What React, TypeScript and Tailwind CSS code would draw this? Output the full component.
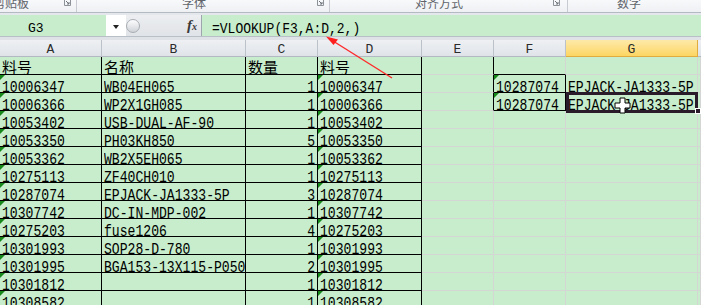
import React from 'react';

type Row = { a: string; b: string; c: string; d: string; f?: string; g?: string };

const rows: Row[] = [
  { a: '料号', b: '名称', c: '数量', d: '料号' },
  { a: '10006347', b: 'WB04EH065', c: '1', d: '10006347', f: '10287074', g: 'EPJACK-JA1333-5P' },
  { a: '10006366', b: 'WP2X1GH085', c: '1', d: '10006366', f: '10287074', g: 'EPJACK-JA1333-5P' },
  { a: '10053402', b: 'USB-DUAL-AF-90', c: '1', d: '10053402' },
  { a: '10053350', b: 'PH03KH850', c: '5', d: '10053350' },
  { a: '10053362', b: 'WB2X5EH065', c: '1', d: '10053362' },
  { a: '10275113', b: 'ZF40CH010', c: '1', d: '10275113' },
  { a: '10287074', b: 'EPJACK-JA1333-5P', c: '3', d: '10287074' },
  { a: '10307742', b: 'DC-IN-MDP-002', c: '1', d: '10307742' },
  { a: '10275203', b: 'fuse1206', c: '4', d: '10275203' },
  { a: '10301993', b: 'SOP28-D-780', c: '1', d: '10301993' },
  { a: '10301995', b: 'BGA153-13X115-P050', c: '2', d: '10301995' },
  { a: '10301812', b: '', c: '1', d: '10301812' },
  { a: '10308582', b: '', c: '1', d: '10308582' },
];

const R_BLK = 'border-r-black';
const R_GRY = 'border-r-[#d3d6d3]';
const B_BLK = 'border-b-black';
const B_GRY = 'border-b-[#d3d6d3]';

const mono = "font-['Liberation_Mono','Noto_Sans_CJK_SC',monospace]";

// ascii cell text, stretched a little to look like SimSun's half-width glyphs
const T = ({ children }: { children: React.ReactNode }) => (
  <span className={`${mono} -mb-[4px] inline-block origin-bottom scale-y-130 whitespace-nowrap text-[13.1px] leading-none text-black`}>
    {children}
  </span>
);

const Cjk = ({ children }: { children: React.ReactNode }) => (
  <span className="inline-block whitespace-nowrap font-['Noto_Sans_CJK_SC',sans-serif] text-[15px] leading-[15px] text-black">
    {children}
  </span>
);

function Cell({
  w,
  rb,
  bb,
  right,
  tri,
  children,
}: {
  w: string;
  rb: string;
  bb: string;
  right?: boolean;
  tri?: boolean;
  children?: React.ReactNode;
}) {
  return (
    <div
      className={`relative flex h-full shrink-0 items-end overflow-hidden border-r border-b ${w} ${rb} ${bb} ${
        right ? 'justify-end pr-[2px]' : 'pl-[2px]'
      }`}
    >
      {tri && (
        <span className="absolute left-0 top-0 h-0 w-0 border-t-[5px] border-r-[5px] border-t-[#16881a] border-r-transparent" />
      )}
      {children}
    </div>
  );
}

function DataRow({ r, i }: { r: Row; i: number }) {
  const head = i === 0;
  const txt = (s: string) => (s ? head ? <Cjk>{s}</Cjk> : <T>{s}</T> : null);
  return (
    <div className="flex h-[18px]">
      <Cell w="w-[102px]" rb={R_BLK} bb={B_BLK} tri={!head}>{txt(r.a)}</Cell>
      <Cell w="w-[144px]" rb={R_BLK} bb={B_BLK}>{txt(r.b)}</Cell>
      <Cell w="w-[72px]" rb={R_BLK} bb={B_BLK} right={!head}>{txt(r.c)}</Cell>
      <Cell w="w-[104px]" rb={R_BLK} bb={B_BLK} tri={!head}>{txt(r.d)}</Cell>
      <Cell w="w-[72px]" rb={i <= 2 ? R_BLK : R_GRY} bb={B_GRY} />
      <Cell w="w-[72px]" rb={i === 1 || i === 2 ? R_BLK : R_GRY} bb={i <= 2 ? B_BLK : B_GRY} tri={!!r.f}>
        {r.f && <T>{r.f}</T>}
      </Cell>
      <Cell w="w-[132px]" rb={R_GRY} bb={B_GRY}>{r.g && <T>{r.g}</T>}</Cell>
      <Cell w="flex-1" rb={R_GRY} bb={B_GRY} />
    </div>
  );
}

const Launcher = ({ className }: { className: string }) => (
  <svg width="7" height="6" viewBox="0 0 7 6" className={className}>
    <path d="M0.5 0 V5.5 H6.5 V0" fill="none" stroke="#8d9299" />
    <path d="M2 1 L5 4 M5 2 V4 H3" fill="none" stroke="#6f747b" />
  </svg>
);

const headers = [
  { k: 'A', w: 'w-[102px]' },
  { k: 'B', w: 'w-[144px]' },
  { k: 'C', w: 'w-[72px]' },
  { k: 'D', w: 'w-[104px]' },
  { k: 'E', w: 'w-[72px]' },
  { k: 'F', w: 'w-[72px]' },
];

export default function App() {
  return (
    <div className="relative h-[305px] w-[701px] overflow-hidden bg-[#c7edcc]">
      {/* ribbon group labels, cut off at the top */}
      <div className="flex h-[12px] overflow-hidden bg-gradient-to-b from-[#f8f9fb] to-[#eef0f3] font-['Noto_Sans_CJK_SC',sans-serif] text-[12px] leading-[12px] text-[#60646a]">
        <div className="flex w-[77px] shrink-0 items-start border-r border-r-[#c8ccd2]">
          <span className="-ml-[7px] -mt-[3px] whitespace-nowrap">剪贴板</span>
          <Launcher className="ml-auto mr-[5px]" />
        </div>
        <div className="flex w-[253px] shrink-0 items-start border-r border-r-[#c8ccd2] pl-[105px]">
          <span className="-mt-[3px] whitespace-nowrap">字体</span>
          <Launcher className="ml-auto mr-[5px]" />
        </div>
        <div className="flex w-[238px] shrink-0 items-start border-r border-r-[#c8ccd2] pl-[85px]">
          <span className="-mt-[3px] whitespace-nowrap">对齐方式</span>
          <Launcher className="ml-auto mr-[7px]" />
        </div>
        <div className="flex flex-1 items-start pl-[49px]">
          <span className="-mt-[3px] whitespace-nowrap">数字</span>
        </div>
      </div>
      <div className="h-[1px] bg-[#b4bac2]" />
      <div className="h-[2px] bg-[#e4e7eb]" />

      {/* formula bar */}
      <div className="flex h-[21px]">
        <div className="flex w-[106px] shrink-0 items-center bg-[#c7edcc] pl-[28px]">
          <span className={`${mono} mt-[5px] text-[13px] leading-none text-black`}>G3</span>
        </div>
        <div className="flex w-[20px] shrink-0 items-center justify-center bg-white">
          <span className="mt-[2px] h-0 w-0 border-x-[3px] border-t-[4px] border-x-transparent border-t-[#222]" />
        </div>
        <div className="flex w-[75px] shrink-0 items-center bg-gradient-to-b from-[#eceef1] to-[#e0e3e7]">
          <div className="h-[14px] w-[14px] rounded-full border border-[#a8adb4] bg-gradient-to-b from-[#fdfdfe] to-[#cfd3d8]" />
          <span className="ml-auto mr-[4px] font-['Liberation_Serif',serif] text-[15px] font-bold italic leading-none text-[#3a3a3a]">
            f<span className="text-[10px]">x</span>
          </span>
        </div>
        <div className="w-[1px] shrink-0 bg-[#9fa5ad]" />
        <div className="flex flex-1 items-center bg-[#c7edcc] pl-[10px]">
          <span className={`${mono} mt-[5px] inline-block scale-y-115 text-[13px] leading-none text-black`}>
            =VLOOKUP(F3,A:D,2,)
          </span>
        </div>
      </div>
      <div className="h-[1px] bg-[#b9bfc7]" />
      <div className="h-[3px] bg-[#dfe3e8]" />

      {/* column headers */}
      <div className="flex h-[17px] bg-gradient-to-b from-[#eef0f3] to-[#dfe3e8]">
        {headers.map((h) => (
          <div
            key={h.k}
            className={`flex shrink-0 items-center justify-center border-r border-b border-r-[#bcc2ca] border-b-[#b3b9c2] ${h.w}`}
          >
            <span className={`${mono} mt-[2px] text-[13px] leading-none text-[#2b2b2b]`}>{h.k}</span>
          </div>
        ))}
        <div className="flex w-[132px] shrink-0 items-center justify-center border-r border-b border-r-[#e2ab3e] border-b-[#e2ab3e] bg-gradient-to-b from-[#fde9a8] to-[#fdd660]">
          <span className={`${mono} mt-[2px] text-[13px] leading-none text-[#2b2b2b]`}>G</span>
        </div>
        <div className="flex-1 border-b border-b-[#b3b9c2]" />
      </div>

      {/* sheet */}
      <div>
        {rows.map((r, i) => (
          <DataRow key={i} r={r} i={i} />
        ))}
      </div>

      {/* active cell G3 */}
      <div className="pointer-events-none absolute left-[566px] top-[92px] h-[21px] w-[132px] border-[3px] border-[#2a1b2b]" />
      <div className="pointer-events-none absolute left-[695px] top-[108px] h-[6px] w-[6px] border border-white bg-[#2a1b2b]" />

      {/* annotation arrow + mouse cursor */}
      <svg className="pointer-events-none absolute left-0 top-0" width="701" height="305" viewBox="0 0 701 305">
        <line x1="392" y1="78" x2="333" y2="41" stroke="#ff2a2a" strokeWidth="1.4" />
        <polygon points="326,36.5 338,39.5 333.5,45" fill="#ff1f1f" />
        <path
          d="M620 98 H625 V103 H630 V108 H625 V113 H620 V108 H615 V103 H620 Z"
          fill="#fff"
          stroke="#000"
          strokeWidth="1"
        />
      </svg>
    </div>
  );
}
